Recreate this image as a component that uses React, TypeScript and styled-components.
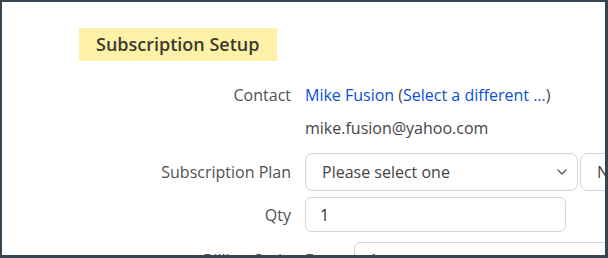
import styled, { createGlobalStyle } from 'styled-components';

const GlobalStyle = createGlobalStyle`
  html, body {
    margin: 0;
    padding: 0;
    background: #ffffff;
  }
  * {
    box-sizing: border-box;
  }
`;

const Frame = styled.div`
  width: 608px;
  height: 258px;
  border-style: solid;
  border-color: #36454f;
  border-width: 2px 3px 3px 2px;
  background: #ffffff;
  overflow: hidden;
  font-family: 'Open Sans', 'Liberation Sans', sans-serif;
  color: #4f4f4f;
`;

const Heading = styled.h2`
  display: inline-block;
  margin: 26px 0 0 77px;
  padding: 0 17px;
  height: 33px;
  line-height: 33px;
  font-size: 18px;
  font-weight: 600;
  color: #3b3a30;
  background: #fdf1a8;
`;

const Form = styled.div`
  display: flex;
  flex-direction: column;
`;

const Row = styled.div<{ $mt: number; $h: number }>`
  display: grid;
  grid-template-columns: 289px 1fr;
  column-gap: 14px;
  align-items: center;
  margin-top: ${({ $mt }) => $mt}px;
  height: ${({ $h }) => $h}px;
`;

const Label = styled.div`
  text-align: right;
  font-size: 16px;
  color: #505050;
  white-space: nowrap;
`;

const Value = styled.div`
  display: flex;
  align-items: center;
  gap: 2px;
  font-size: 16px;
  white-space: nowrap;
  min-width: 0;
`;

const LinkText = styled.span`
  color: #0b4fd8;
`;

const Paren = styled.span`
  color: #4a4a4a;
`;

const Email = styled.span`
  color: #444444;
`;

const Select = styled.div<{ $w: number }>`
  flex: none;
  display: flex;
  align-items: center;
  justify-content: space-between;
  width: ${({ $w }) => $w}px;
  height: 38px;
  padding: 0 10px 0 16px;
  border: 1px solid #d2d2d2;
  border-radius: 8px;
  color: #444444;
  font-size: 16px;
`;

const Input = styled.div<{ $w: number; $h: number }>`
  flex: none;
  display: flex;
  align-items: center;
  width: ${({ $w }) => $w}px;
  height: ${({ $h }) => $h}px;
  padding: 0 14px;
  border: 1px solid #d6d6d6;
  border-radius: 6px;
  color: #333333;
  font-size: 16px;
`;

const Every = styled.span`
  display: block;
  flex: none;
  color: #555555;
  width: 47px;
`;

const Chevron = () => (
  <svg width="10" height="6" viewBox="0 0 10 6" fill="none">
    <path d="M1 1l4 4 4-4" stroke="#555" strokeWidth="1.3" strokeLinecap="round" strokeLinejoin="round" />
  </svg>
);

export default function App() {
  return (
    <>
      <GlobalStyle />
      <Frame>
        <Heading>Subscription Setup</Heading>
        <Form>
          <Row $mt={22} $h={24}>
            <Label>Contact</Label>
            <Value>
              <span>
                <LinkText>Mike Fusion</LinkText> <Paren>(</Paren>
                <LinkText>Select a different ...</LinkText>
                <Paren>)</Paren>
              </span>
            </Value>
          </Row>
          <Row $mt={9} $h={24}>
            <span />
            <Value>
              <Email>mike.fusion@yahoo.com</Email>
            </Value>
          </Row>
          <Row $mt={13} $h={38}>
            <Label>Subscription Plan</Label>
            <Value>
              <Select $w={273}>
                <span>Please select one</span>
                <Chevron />
              </Select>
              <Select $w={120}>
                <span>None</span>
                <Chevron />
              </Select>
            </Value>
          </Row>
          <Row $mt={6} $h={35}>
            <Label>Qty</Label>
            <Value>
              <Input $w={261} $h={35}>1</Input>
            </Value>
          </Row>
          <Row $mt={10} $h={36}>
            <Label>Billing Cycle</Label>
            <Value>
              <Every>Every</Every>
              <Input $w={260} $h={36}>1</Input>
            </Value>
          </Row>
        </Form>
      </Frame>
    </>
  );
}
